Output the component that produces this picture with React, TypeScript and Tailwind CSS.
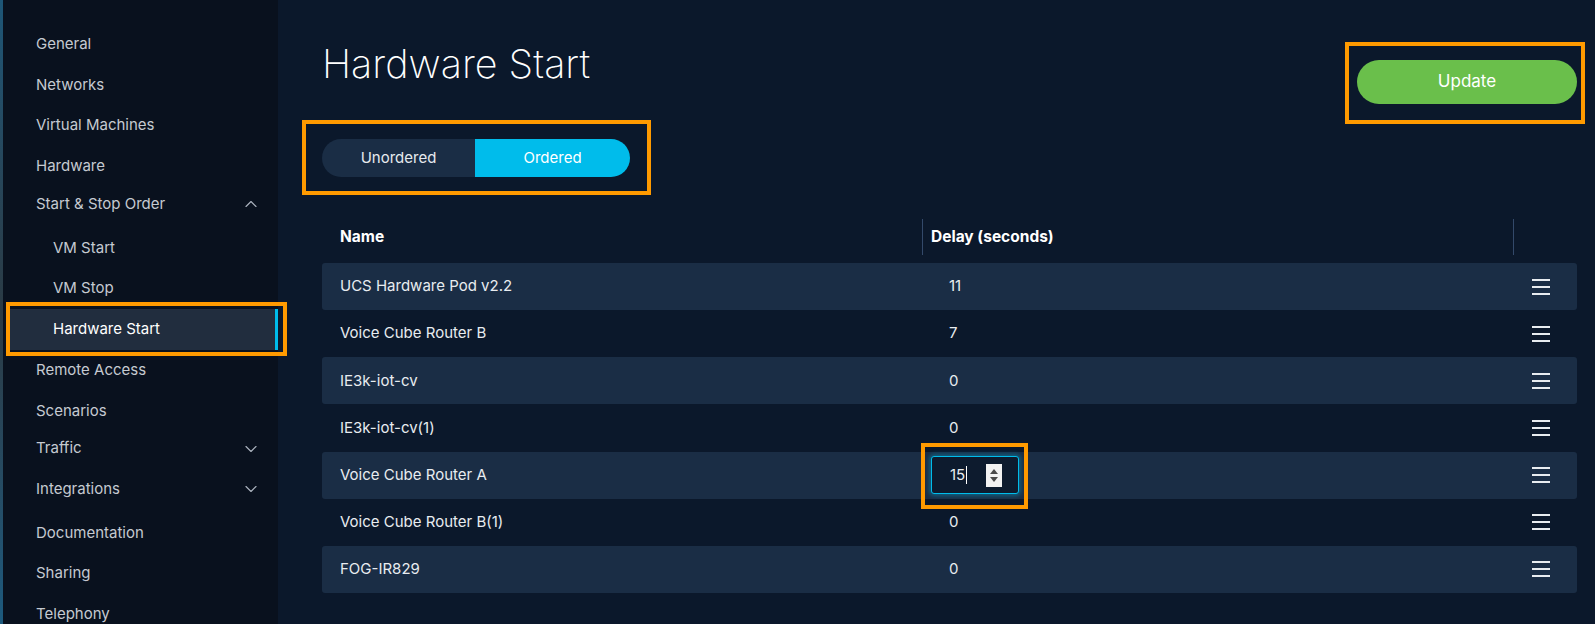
import { ChevronUp, ChevronDown } from "lucide-react";

const navItems: { label: string; sub?: boolean; active?: boolean; chevron?: "up" | "down" }[] = [
  { label: "General" },
  { label: "Networks" },
  { label: "Virtual Machines" },
  { label: "Hardware" },
  { label: "Start & Stop Order", chevron: "up" },
  { label: "VM Start", sub: true },
  { label: "VM Stop", sub: true },
  { label: "Hardware Start", sub: true, active: true },
  { label: "Remote Access" },
  { label: "Scenarios" },
  { label: "Traffic", chevron: "down" },
  { label: "Integrations", chevron: "down" },
  { label: "Documentation" },
  { label: "Sharing" },
  { label: "Telephony" },
];

const rows = [
  { name: "UCS Hardware Pod v2.2", delay: "11" },
  { name: "Voice Cube Router B", delay: "7" },
  { name: "IE3k-iot-cv", delay: "0" },
  { name: "IE3k-iot-cv(1)", delay: "0" },
  { name: "Voice Cube Router A", delay: "15", editing: true },
  { name: "Voice Cube Router B(1)", delay: "0" },
  { name: "FOG-IR829", delay: "0" },
];

function Hamburger() {
  return (
    <div className="flex flex-col gap-[5px] w-[18px]">
      <span className="block h-[2px] bg-[#e8ecf0]" />
      <span className="block h-[2px] bg-[#e8ecf0]" />
      <span className="block h-[2px] bg-[#e8ecf0]" />
    </div>
  );
}

function Sidebar() {
  return (
    <div className="relative z-10 w-[275px] shrink-0 bg-[#09111e] pt-[24px]">
      {navItems.map((item) => (
        <div
          key={item.label}
          className={
            item.active
              ? "relative ml-[7px] h-[41px] flex items-center pl-[43px] bg-[#212d3e] text-white"
              : "h-[40.7px] flex items-center justify-between pr-[17px] text-[#c5cad1] " +
                (item.sub ? "pl-[50px]" : "pl-[33px]")
          }
        >
          <span className={"text-[15px] " + (item.chevron ? "relative -top-[3px]" : "")}>{item.label}</span>
          {item.chevron === "up" && <ChevronUp size={20} strokeWidth={1.4} className="text-[#aab2bd] relative -top-[3px]" />}
          {item.chevron === "down" && <ChevronDown size={20} strokeWidth={1.4} className="text-[#aab2bd] relative -top-[3px]" />}
          {item.active && (
            <>
              <span className="absolute right-0 top-0 bottom-0 w-[3px] bg-[#00bceb]" />
              <span className="absolute -left-[4px] -top-[7px] -bottom-[6px] -right-[9px] border-[4px] border-[#ff9a00]" />
            </>
          )}
        </div>
      ))}
    </div>
  );
}

export default function App() {
  return (
    <div
      className="flex w-[1595px] h-[624px] overflow-hidden bg-[#0b182b] text-white"
      style={{ fontFamily: "Inter, 'Liberation Sans', sans-serif" }}
    >
      <div className="w-[3px] shrink-0 bg-gradient-to-b from-[#1d5677] via-[#2a3a44] to-[#1c5a7e]" />
      <Sidebar />

      <main className="w-[1317px] shrink-0 pl-[44px] pr-[18px]">
        {/* Header */}
        <div className="flex items-start justify-between">
          <h1 className="mt-[42px] text-[39.5px] font-extralight leading-[44px]">Hardware Start</h1>
          <div className="relative mt-[60px]">
            <button className="w-[220px] h-[44px] rounded-full bg-[#6abf4b] text-[17px] text-white">Update</button>
            <span className="absolute -left-[12px] -top-[18px] -right-[8px] -bottom-[20px] border-[4px] border-[#ff9a00]" />
          </div>
        </div>

        {/* Ordered toggle */}
        <div className="relative mt-[35px] w-[308px] h-[38px]">
          <div className="flex w-full h-full rounded-full overflow-hidden text-[15px]">
            <div className="w-[153px] bg-[#1a2d45] flex items-center justify-center text-[#e6eaee]">Unordered</div>
            <div className="flex-1 bg-[#00bceb] flex items-center justify-center">Ordered</div>
          </div>
          <span className="absolute -left-[20px] -top-[19px] -right-[21px] -bottom-[18px] border-[4px] border-[#ff9a00]" />
        </div>

        {/* Table */}
        <div className="mt-[42px] w-[1255px]">
          <div className="flex items-center h-[36px] text-[15.5px] font-bold">
            <div className="w-[600px] pl-[18px]">Name</div>
            <div className="w-[1px] h-[36px] bg-[#33496a]" />
            <div className="w-[590px] pl-[8px]">Delay (seconds)</div>
            <div className="w-[1px] h-[36px] bg-[#33496a]" />
            <div className="flex-1" />
          </div>
          <div className="mt-[8px]">
            {rows.map((r, i) => (
              <div
                key={r.name}
                className={
                  "flex items-center h-[47.15px] rounded-[3px] text-[15px] text-[#e8ecf0] " +
                  (i % 2 === 0 ? "bg-[#1a2d45]" : "")
                }
              >
                <div className="w-[601px] pl-[18px]">{r.name}</div>
                {r.editing ? (
                  <div className="w-[591px] pl-[8px]">
                    <div className="relative w-[88px] h-[38px] rounded-[3px] border border-[#00bceb] bg-[#0d1b2e] shadow-[0_0_4px_2px_rgba(0,188,235,0.35)] flex items-center">
                      <span className="pl-[18px]">15</span>
                      <span className="ml-[1px] w-[1px] h-[18px] bg-white" />
                      <div className="ml-auto mr-[16px] w-[16px] h-[23px] bg-[#f2f2f2] flex flex-col items-center justify-center gap-[3px]">
                        <svg width="8" height="5" viewBox="0 0 8 5"><path d="M4 0L8 5H0Z" fill="#4a4a4a" /></svg>
                        <svg width="8" height="5" viewBox="0 0 8 5"><path d="M0 0H8L4 5Z" fill="#4a4a4a" /></svg>
                      </div>
                      <span className="absolute -left-[11px] -top-[14px] -right-[10px] -bottom-[16px] border-[4px] border-[#ff9a00]" />
                    </div>
                  </div>
                ) : (
                  <div className="w-[591px] pl-[26px]">{r.delay}</div>
                )}
                <div className="flex-1 pl-[18px]">
                  <Hamburger />
                </div>
              </div>
            ))}
          </div>
        </div>
      </main>
    </div>
  );
}
